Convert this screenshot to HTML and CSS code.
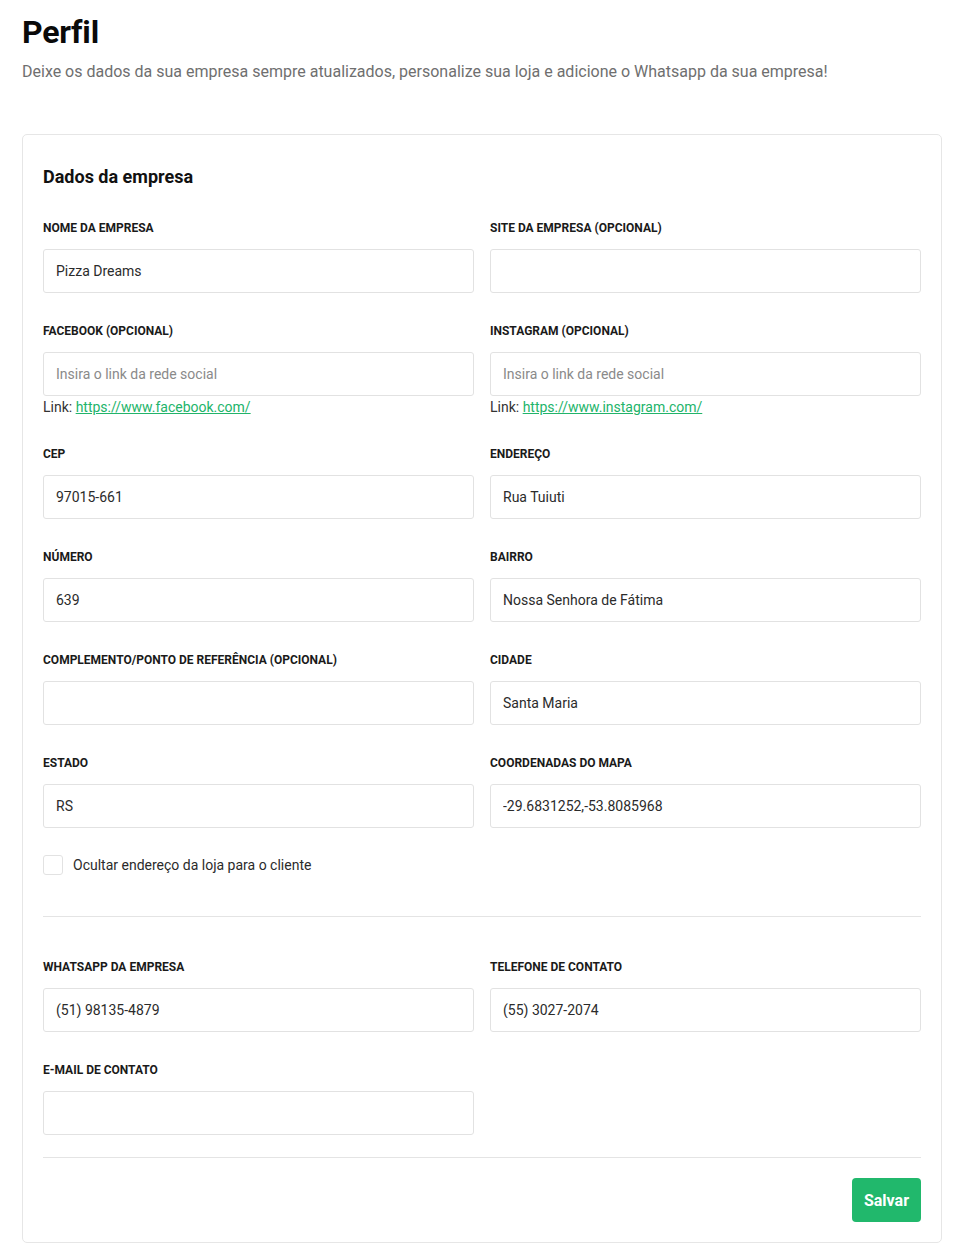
FILE: index.html
```html
<!DOCTYPE html>
<html lang="pt-BR">
<head>
<meta charset="utf-8">
<title>Perfil</title>
<link rel="stylesheet" href="styles.css">
</head>
<body>
<main class="page">
  <header class="page-header">
    <h1 class="page-title">Perfil</h1>
    <p class="page-subtitle">Deixe os dados da sua empresa sempre atualizados, personalize sua loja e adicione o Whatsapp da sua empresa!</p>
  </header>

  <section class="card">
    <h2 class="card-title">Dados da empresa</h2>

    <div class="form-grid">
      <div class="field">
        <label class="field-label">Nome da empresa</label>
        <input class="field-input" type="text" value="Pizza Dreams">
      </div>
      <div class="field">
        <label class="field-label">Site da empresa (opcional)</label>
        <input class="field-input" type="text" value="">
      </div>

      <div class="field">
        <label class="field-label">Facebook (opcional)</label>
        <input class="field-input" type="text" placeholder="Insira o link da rede social">
        <p class="field-link">Link: <a href="#">https://www.facebook.com/</a></p>
      </div>
      <div class="field">
        <label class="field-label">Instagram (opcional)</label>
        <input class="field-input" type="text" placeholder="Insira o link da rede social">
        <p class="field-link">Link: <a href="#">https://www.instagram.com/</a></p>
      </div>

      <div class="field">
        <label class="field-label">CEP</label>
        <input class="field-input" type="text" value="97015-661">
      </div>
      <div class="field">
        <label class="field-label">Endereço</label>
        <input class="field-input" type="text" value="Rua Tuiuti">
      </div>

      <div class="field">
        <label class="field-label">Número</label>
        <input class="field-input" type="text" value="639">
      </div>
      <div class="field">
        <label class="field-label">Bairro</label>
        <input class="field-input" type="text" value="Nossa Senhora de Fátima">
      </div>

      <div class="field">
        <label class="field-label">Complemento/Ponto de referência (opcional)</label>
        <input class="field-input" type="text" value="">
      </div>
      <div class="field">
        <label class="field-label">Cidade</label>
        <input class="field-input" type="text" value="Santa Maria">
      </div>

      <div class="field">
        <label class="field-label">Estado</label>
        <input class="field-input" type="text" value="RS">
      </div>
      <div class="field">
        <label class="field-label">Coordenadas do mapa</label>
        <input class="field-input" type="text" value="-29.6831252,-53.8085968">
      </div>
    </div>

    <label class="check-row">
      <span class="check-box"></span>
      <span class="check-text">Ocultar endereço da loja para o cliente</span>
    </label>

    <hr class="divider divider-top">

    <div class="form-grid">
      <div class="field">
        <label class="field-label">Whatsapp da empresa</label>
        <input class="field-input" type="text" value="(51) 98135-4879">
      </div>
      <div class="field">
        <label class="field-label">Telefone de contato</label>
        <input class="field-input" type="text" value="(55) 3027-2074">
      </div>
      <div class="field">
        <label class="field-label">E-mail de contato</label>
        <input class="field-input" type="text" value="">
      </div>
    </div>

    <hr class="divider divider-bottom">

    <div class="actions">
      <button class="btn-save" type="button">Salvar</button>
    </div>
  </section>
</main>
</body>
</html>
```

FILE: styles.css
```css
* {
  box-sizing: border-box;
}

html, body {
  margin: 0;
  padding: 0;
  background: #ffffff;
}

body {
  font-family: Roboto, "Liberation Sans", Arial, sans-serif;
  color: #222222;
}

.page {
  padding: 12px 25px 12px 22px;
}

.page-header {
  margin-bottom: 52px;
}

.page-title {
  margin: 0;
  font-size: 32px;
  line-height: 40px;
  font-weight: 700;
  color: #0a0a0a;
  letter-spacing: -0.2px;
}

.page-subtitle {
  margin: 10px 0 0;
  font-size: 16px;
  line-height: 20px;
  color: #6f6f6f;
}

.card {
  border: 1px solid #e6e6e6;
  border-radius: 5px;
  padding: 31px 20px 20px;
  background: #ffffff;
}

.card-title {
  margin: 0 0 32px;
  font-size: 18px;
  line-height: 22px;
  font-weight: 700;
  color: #111111;
}

.form-grid {
  display: grid;
  grid-template-columns: 1fr 1fr;
  column-gap: 16px;
  row-gap: 30px;
}

.field {
  display: flex;
  flex-direction: column;
  min-width: 0;
}

.field-label {
  display: block;
  font-size: 12px;
  line-height: 16px;
  font-weight: 700;
  text-transform: uppercase;
  color: #1a1a1a;
  margin-bottom: 13px;
}

.field-input {
  display: block;
  width: 100%;
  height: 44px;
  border: 1px solid #e2e2e2;
  border-radius: 3px;
  padding: 0 12px;
  font-family: inherit;
  font-size: 14px;
  color: #2b2b2b;
  background: #ffffff;
  outline: none;
}

.field-input::placeholder {
  color: #8a8a8a;
}

.field-link {
  margin: 2px 0 0;
  font-size: 14px;
  line-height: 18px;
  color: #333333;
}

.field-link a {
  color: #22b46a;
  text-decoration: underline;
}

.check-row {
  display: flex;
  align-items: center;
  gap: 10px;
  margin-top: 27px;
  cursor: pointer;
}

.check-box {
  width: 20px;
  height: 20px;
  border: 1px solid #e2e2e2;
  border-radius: 3px;
  background: #ffffff;
  flex-shrink: 0;
}

.check-text {
  font-size: 14px;
  line-height: 20px;
  color: #2b2b2b;
}

.divider {
  border: 0;
  border-top: 1px solid #e4e4e4;
  margin: 0;
}

.divider-top {
  margin-top: 41px;
  margin-bottom: 42px;
}

.divider-bottom {
  margin-top: 22px;
  margin-bottom: 20px;
}

.actions {
  display: flex;
  justify-content: flex-end;
}

.btn-save {
  height: 44px;
  padding: 0 12px;
  border: 0;
  border-radius: 4px;
  background: #21b86c;
  color: #ffffff;
  font-family: inherit;
  font-size: 16px;
  font-weight: 700;
  cursor: pointer;
}
```
